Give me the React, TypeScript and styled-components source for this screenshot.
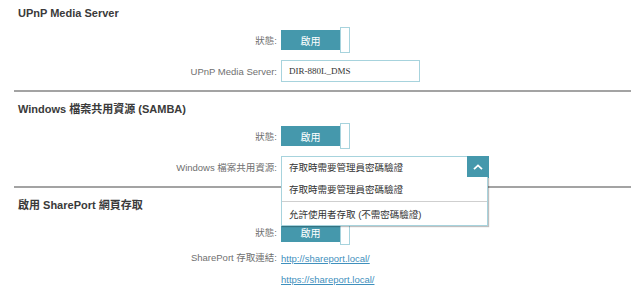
import React, { useState } from 'react';
import styled, { createGlobalStyle } from 'styled-components';

const colors = {
  teal: '#4598ac',
  tealLight: '#a7d3dd',
  title: '#3a3a3a',
  label: '#707070',
  text: '#333333',
  link: '#3f90bd',
  rule: '#a3a3a3',
};

const GlobalStyle = createGlobalStyle`
  html, body {
    margin: 0;
    padding: 0;
    background: #ffffff;
    font-family: "Liberation Sans", Arial, "Noto Sans CJK TC", sans-serif;
    overflow: hidden;
  }
`;

const Page = styled.div`
  width: 640px;
  height: 292px;
  margin-top: -4px;
  padding-left: 14px;
  box-sizing: border-box;
`;

const Section = styled.section`
  width: 617px;
  padding: 4px 0 8px;
  border-bottom: 2px solid ${colors.rule};

  &:last-child {
    border-bottom: none;
  }
`;

const Title = styled.h2`
  margin: 0;
  padding-left: 4px;
  height: 27px;
  line-height: 27px;
  font-size: 11px;
  font-weight: bold;
  color: ${colors.title};
`;

const Row = styled.div<{ gapTop?: number; height?: number }>`
  display: grid;
  grid-template-columns: 263px 1fr;
  column-gap: 4px;
  align-items: center;
  height: ${p => p.height ?? 26}px;
  margin-top: ${p => p.gapTop ?? 0}px;
`;

const Label = styled.div`
  text-align: right;
  font-size: 9.5px;
  color: ${colors.label};
  white-space: nowrap;
`;

const ToggleWrap = styled.div`
  display: flex;
  align-items: center;
  height: 26px;
`;

const ToggleTrack = styled.div`
  width: 59px;
  height: 20px;
  background: ${colors.teal};
  color: #ffffff;
  font-size: 10px;
  display: flex;
  align-items: center;
  justify-content: center;
`;

const ToggleKnob = styled.div`
  width: 8px;
  height: 24px;
  background: #ffffff;
  border: 1px solid ${colors.tealLight};
`;

const TextInput = styled.input`
  box-sizing: border-box;
  width: 139px;
  height: 22px;
  padding: 0 7px;
  border: 1px solid ${colors.tealLight};
  font-family: "Liberation Serif", "Times New Roman", serif;
  font-size: 9px;
  color: ${colors.text};
  outline: none;
`;

const SelectWrap = styled.div`
  position: relative;
  width: 208px;
  height: 22px;
`;

const SelectBox = styled.div`
  box-sizing: border-box;
  display: flex;
  height: 22px;
  border: 1px solid ${colors.tealLight};
`;

const SelectValue = styled.div`
  flex: 1;
  padding-left: 7px;
  display: flex;
  align-items: center;
  font-size: 9.5px;
  color: ${colors.text};
`;

const SelectButton = styled.div`
  width: 22px;
  margin: -1px -1px -1px 0;
  background: ${colors.teal};
  display: flex;
  align-items: center;
  justify-content: center;
`;

const Menu = styled.ul`
  position: absolute;
  top: 21px;
  left: 0;
  width: 207px;
  box-sizing: border-box;
  margin: 0;
  padding: 0;
  list-style: none;
  background: #ffffff;
  border: 1px solid ${colors.tealLight};
  border-top: none;
  box-shadow: 1px 1px 1px rgba(0, 0, 0, 0.25);
  z-index: 10;
`;

const MenuItem = styled.li`
  height: 24px;
  padding-left: 7px;
  display: flex;
  align-items: center;
  font-size: 9.5px;
  color: ${colors.text};

  & + & {
    border-top: 1px solid #cfcfcf;
    height: 23px;
  }
`;

const Link = styled.a`
  font-size: 9.5px;
  color: ${colors.link};
  text-decoration: underline;
`;

const Toggle: React.FC<{ label: string }> = ({ label }) => (
  <ToggleWrap>
    <ToggleTrack>{label}</ToggleTrack>
    <ToggleKnob />
  </ToggleWrap>
);

const ChevronUp = () => (
  <svg width="10" height="6" viewBox="0 0 10 6">
    <path d="M1 5.2 L5 1.4 L9 5.2" fill="none" stroke="#ffffff" strokeWidth="1.8" />
  </svg>
);

const sambaOptions = ['存取時需要管理員密碼驗證', '允許使用者存取 (不需密碼驗證)'];

const App: React.FC = () => {
  const [dmsName, setDmsName] = useState('DIR-880L_DMS');
  const [samba] = useState(sambaOptions[0]);

  return (
    <>
      <GlobalStyle />
      <Page>
        <Section>
          <Title>UPnP Media Server</Title>
          <Row>
            <Label>狀態:</Label>
            <Toggle label="啟用" />
          </Row>
          <Row gapTop={7} height={22}>
            <Label>UPnP Media Server:</Label>
            <TextInput value={dmsName} onChange={e => setDmsName(e.target.value)} />
          </Row>
        </Section>

        <Section>
          <Title>Windows 檔案共用資源 (SAMBA)</Title>
          <Row>
            <Label>狀態:</Label>
            <Toggle label="啟用" />
          </Row>
          <Row gapTop={7} height={22}>
            <Label>Windows 檔案共用資源:</Label>
            <SelectWrap>
              <SelectBox>
                <SelectValue>{samba}</SelectValue>
                <SelectButton>
                  <ChevronUp />
                </SelectButton>
              </SelectBox>
              <Menu>
                {sambaOptions.map(opt => (
                  <MenuItem key={opt}>{opt}</MenuItem>
                ))}
              </Menu>
            </SelectWrap>
          </Row>
        </Section>

        <Section>
          <Title>啟用 SharePort 網頁存取</Title>
          <Row>
            <Label>狀態:</Label>
            <Toggle label="啟用" />
          </Row>
          <Row gapTop={1} height={21}>
            <Label>SharePort 存取連結:</Label>
            <div>
              <Link href="#">http://shareport.local/</Link>
            </div>
          </Row>
          <Row height={21}>
            <Label />
            <div>
              <Link href="#">https://shareport.local/</Link>
            </div>
          </Row>
        </Section>
      </Page>
    </>
  );
};

export default App;
